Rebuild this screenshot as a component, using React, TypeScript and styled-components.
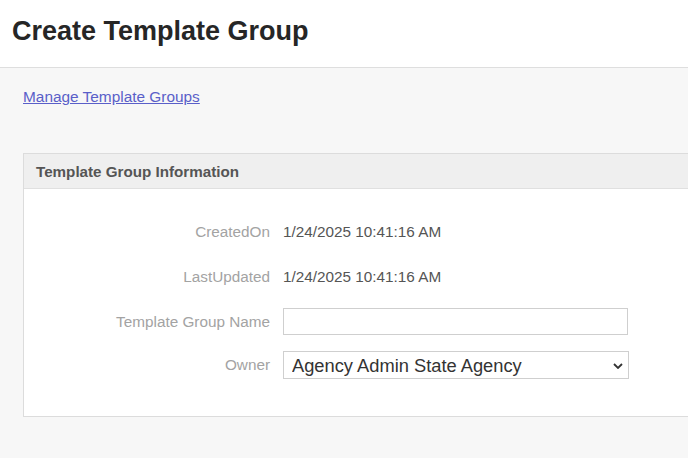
import React from 'react'
import styled, { createGlobalStyle } from 'styled-components'

const GlobalStyle = createGlobalStyle`
  html, body {
    margin: 0;
    padding: 0;
    background: #f7f7f7;
    font-family: "Liberation Sans", Arial, sans-serif;
    overflow: hidden;
  }
`

const Header = styled.div`
  height: 68px;
  background: #ffffff;
  border-bottom: 1px solid #dedede;
  box-sizing: border-box;
  padding: 15px 0 0 12px;
`

const Title = styled.h1`
  margin: 0;
  font-size: 27px;
  font-weight: 700;
  color: #262626;
  line-height: 32px;
`

const Content = styled.div`
  padding: 20px 0 40px 23px;
`

const BackLink = styled.a`
  display: inline-block;
  font-size: 15.4px;
  line-height: 17px;
  color: #5a5fc9;
  text-decoration: underline;
  cursor: pointer;
`

const Panel = styled.div`
  margin-top: 47px;
  width: 700px;
  background: #ffffff;
  border: 1px solid #dcdcdc;
`

const PanelHeader = styled.div`
  height: 34px;
  background: #efefef;
  border-bottom: 1px solid #e0e0e0;
  padding-left: 12px;
  display: flex;
  align-items: center;
  font-size: 15.2px;
  font-weight: 700;
  color: #555555;
`

const PanelBody = styled.div`
  padding: 21px 0 30px;
`

const Row = styled.div<{ h: number }>`
  display: grid;
  grid-template-columns: 246px 346px;
  column-gap: 13px;
  align-items: center;
  height: ${p => p.h}px;
`

const Label = styled.div`
  text-align: right;
  font-size: 15.3px;
  color: #a3a3a3;
`

const Value = styled.div`
  font-size: 15.3px;
  color: #555555;
`

const TextInput = styled.input`
  box-sizing: border-box;
  width: 345px;
  height: 27px;
  border: 1px solid #cfcfcf;
  background: #ffffff;
  margin: 0;
  outline: none;
`

const SelectWrap = styled.div`
  position: relative;
  width: 346px;
  height: 28px;
`

const Select = styled.select`
  appearance: none;
  box-sizing: border-box;
  width: 100%;
  height: 100%;
  margin: 0;
  border: 1px solid #cfcfcf;
  border-radius: 0;
  background: #ffffff;
  padding: 0 30px 0 8px;
  font-family: "Liberation Sans", Arial, sans-serif;
  font-size: 18.3px;
  color: #333333;
  outline: none;
`

const Chevron = styled.svg`
  position: absolute;
  right: 6px;
  top: 12px;
  pointer-events: none;
`

const rows = [
  { label: 'CreatedOn', value: '1/24/2025 10:41:16 AM' },
  { label: 'LastUpdated', value: '1/24/2025 10:41:16 AM' },
]

export default function App() {
  return (
    <>
      <GlobalStyle />
      <Header>
        <Title>Create Template Group</Title>
      </Header>
      <Content>
        <BackLink>Manage Template Groups</BackLink>
        <Panel>
          <PanelHeader>Template Group Information</PanelHeader>
          <PanelBody>
            {rows.map((r, i) => (
              <Row h={i === 0 ? 44 : 45} key={r.label}>
                <Label>{r.label}</Label>
                <Value>{r.value}</Value>
              </Row>
            ))}
            <Row h={45}>
              <Label>Template Group Name</Label>
              <TextInput type="text" />
            </Row>
            <Row h={42}>
              <Label>Owner</Label>
              <SelectWrap>
                <Select defaultValue="agency">
                  <option value="agency">Agency Admin State Agency</option>
                </Select>
                <Chevron width="10" height="6" viewBox="0 0 10 6">
                  <path d="M1 1 L5 5 L9 1" fill="none" stroke="#333" strokeWidth="1.8" />
                </Chevron>
              </SelectWrap>
            </Row>
          </PanelBody>
        </Panel>
      </Content>
    </>
  )
}
